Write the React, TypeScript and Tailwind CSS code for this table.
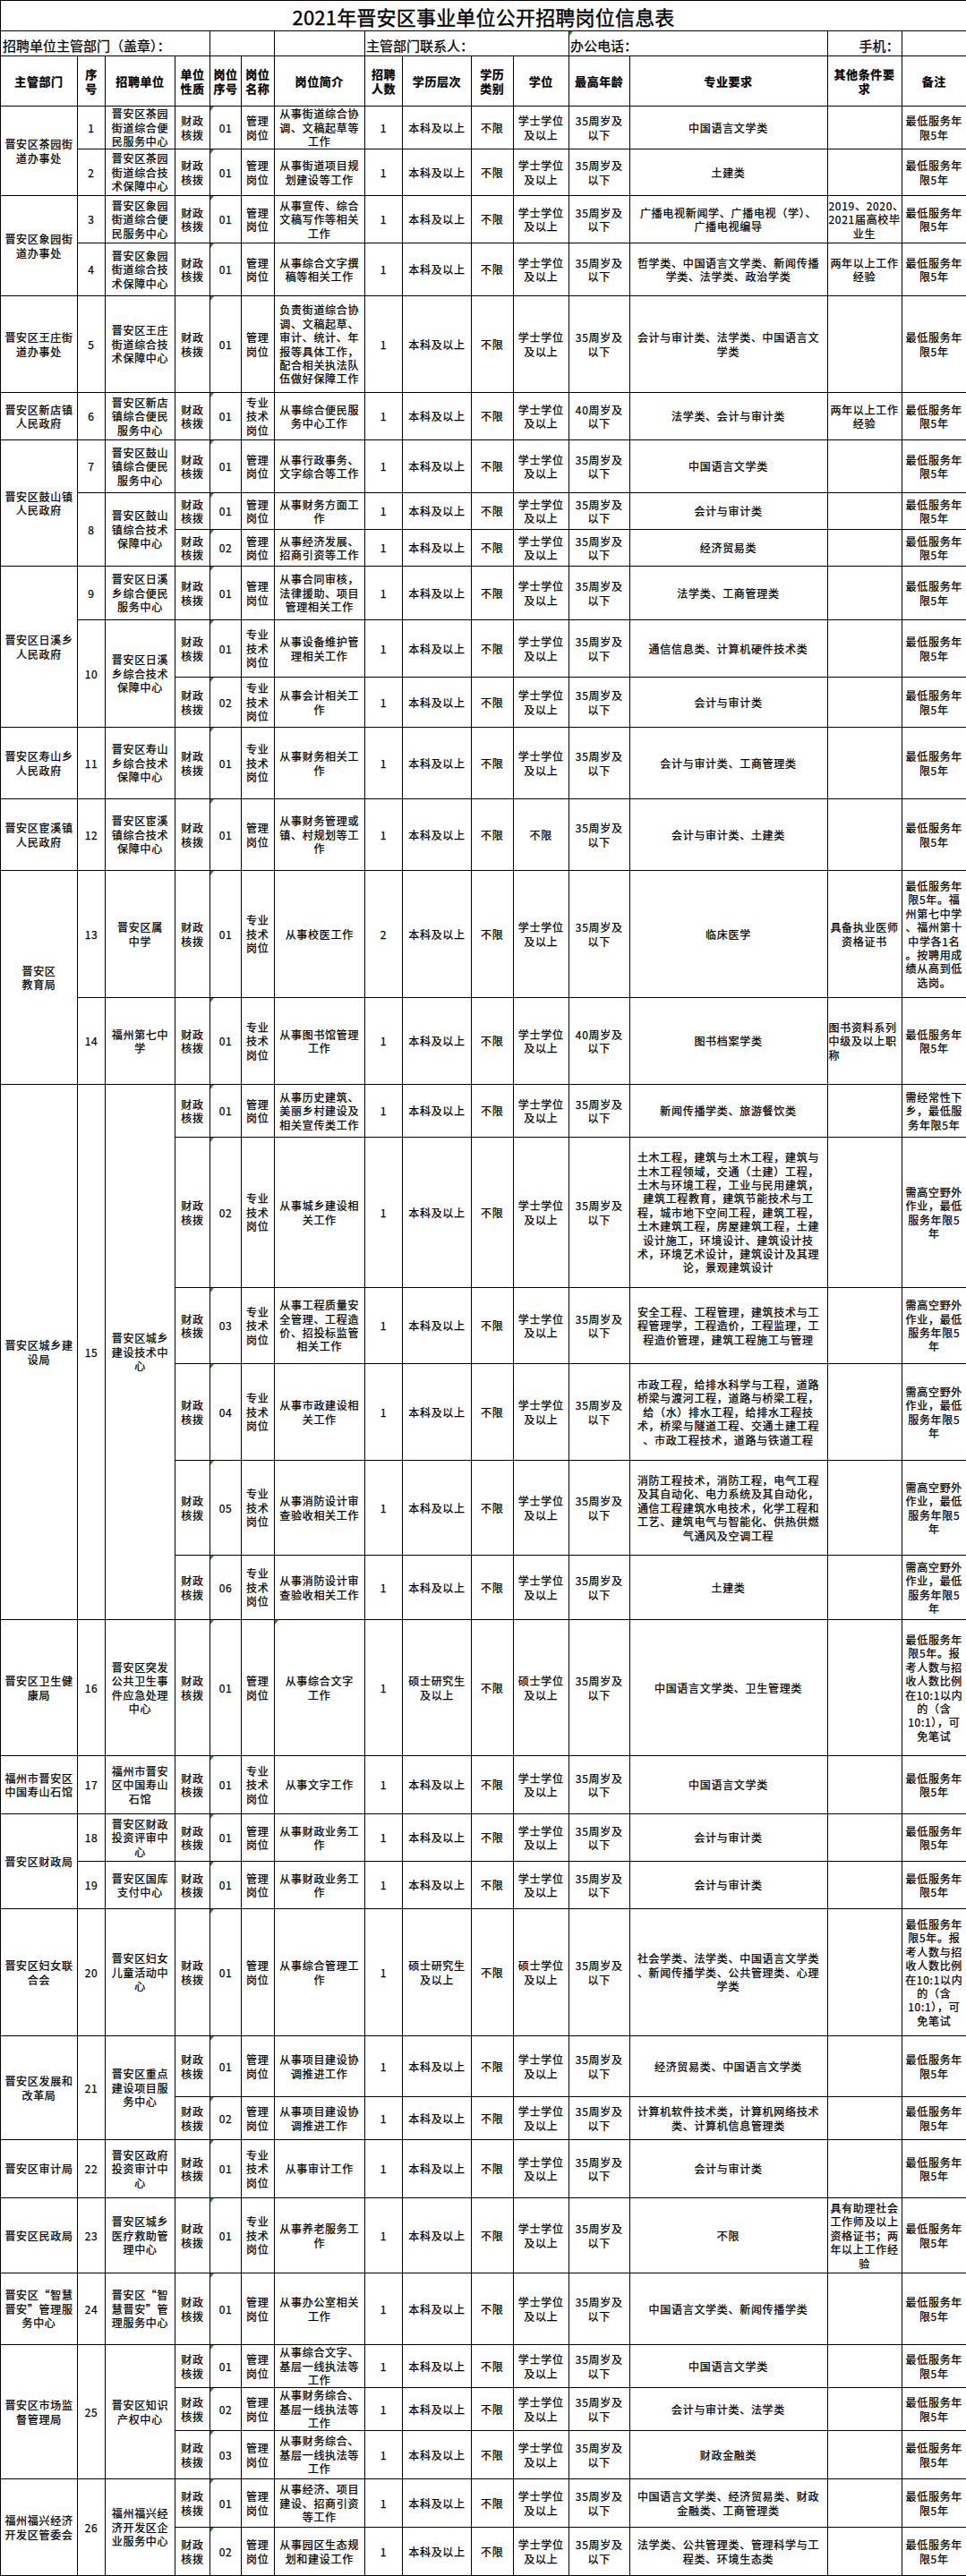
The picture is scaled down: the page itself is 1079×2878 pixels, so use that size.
import React from "react";

type C = { t: string; rs?: number; l?: boolean; tri?: boolean };
type R = { h: string; c: C[] };

const FZ = "财政\n核拨";
const GL = "管理\n岗位";
const ZJ = "专业\n技术\n岗位";
const BK = "本科及以上";
const XS = "学士学位\n及以上";
const A35 = "35周岁及\n以下";
const A40 = "40周岁及\n以下";
const BZ = "最低服务年\n限5年";
const GK = "需高空野外\n作业，最低\n服务年限5\n年";
const BZ10 = "最低服务年\n限5年。报\n考人数与招\n收人数比例\n在10:1以内\n的（含\n10:1），可\n免笔试";
const SS = "硕士研究生\n及以上";
const SX = "硕士学位\n及以上";

const c = (t: string, rs?: number): C => ({ t, rs });

function job(
  pos: string,
  name: string,
  intro: string,
  spec: string,
  other = "",
  bz = BZ,
  o: { n?: string; edu?: string; deg?: string; age?: string; otherLeft?: boolean; introTri?: boolean } = {}
): C[] {
  return [
    { t: FZ },
    { t: pos, tri: true },
    { t: name },
    { t: intro, tri: o.introTri },
    { t: o.n ?? "1" },
    { t: o.edu ?? BK },
    { t: "不限" },
    { t: o.deg ?? XS },
    { t: o.age ?? A35 },
    { t: spec },
    { t: other, l: o.otherLeft },
    { t: bz },
  ];
}

const rows: R[] = [
  { h: "h-[48px]", c: [c("晋安区茶园街\n道办事处", 2), c("1"), c("晋安区茶园\n街道综合便\n民服务中心"), ...job("01", GL, "从事街道综合协\n调、文稿起草等\n工作", "中国语言文学类")] },
  { h: "h-[52px]", c: [c("2"), c("晋安区茶园\n街道综合技\n术保障中心"), ...job("01", GL, "从事街道项目规\n划建设等工作", "土建类")] },
  { h: "h-[53px]", c: [c("晋安区象园街\n道办事处", 2), c("3"), c("晋安区象园\n街道综合便\n民服务中心"), ...job("01", GL, "从事宣传、综合\n文稿写作等相关\n工作", "广播电视新闻学、广播电视（学）、\n广播电视编导", "2019、2020、\n2021届高校毕\n业生")] },
  { h: "h-[59px]", c: [c("4"), c("晋安区象园\n街道综合技\n术保障中心"), ...job("01", GL, "从事综合文字撰\n稿等相关工作", "哲学类、中国语言文学类、新闻传播\n学类、法学类、政治学类", "两年以上工作\n经验")] },
  { h: "h-[108px]", c: [c("晋安区王庄街\n道办事处"), c("5"), c("晋安区王庄\n街道综合技\n术保障中心"), ...job("01", GL, "负责街道综合协\n调、文稿起草、\n审计、统计、年\n报等具体工作，\n配合相关执法队\n伍做好保障工作", "会计与审计类、法学类、中国语言文\n学类")] },
  { h: "h-[53px]", c: [c("晋安区新店镇\n人民政府"), c("6"), c("晋安区新店\n镇综合便民\n服务中心"), ...job("01", ZJ, "从事综合便民服\n务中心工作", "法学类、会计与审计类", "两年以上工作\n经验", BZ, { age: A40 })] },
  { h: "h-[59px]", c: [c("晋安区鼓山镇\n人民政府", 3), c("7"), c("晋安区鼓山\n镇综合便民\n服务中心"), ...job("01", GL, "从事行政事务、\n文字综合等工作", "中国语言文学类")] },
  { h: "h-[41px]", c: [c("8", 2), c("晋安区鼓山\n镇综合技术\n保障中心", 2), ...job("01", GL, "从事财务方面工\n作", "会计与审计类")] },
  { h: "h-[41px]", c: job("02", GL, "从事经济发展、\n招商引资等工作", "经济贸易类") },
  { h: "h-[60px]", c: [c("晋安区日溪乡\n人民政府", 3), c("9"), c("晋安区日溪\n乡综合便民\n服务中心"), ...job("01", GL, "从事合同审核，\n法律援助、项目\n管理相关工作", "法学类、工商管理类")] },
  { h: "h-[64px]", c: [c("10", 2), c("晋安区日溪\n乡综合技术\n保障中心", 2), ...job("01", ZJ, "从事设备维护管\n理相关工作", "通信信息类、计算机硬件技术类")] },
  { h: "h-[56px]", c: job("02", ZJ, "从事会计相关工\n作", "会计与审计类") },
  { h: "h-[80px]", c: [c("晋安区寿山乡\n人民政府"), c("11"), c("晋安区寿山\n乡综合技术\n保障中心"), ...job("01", ZJ, "从事财务相关工\n作", "会计与审计类、工商管理类")] },
  { h: "h-[80px]", c: [c("晋安区宦溪镇\n人民政府"), c("12"), c("晋安区宦溪\n镇综合技术\n保障中心"), ...job("01", GL, "从事财务管理或\n镇、村规划等工\n作", "会计与审计类、土建类", "", BZ, { deg: "不限" })] },
  { h: "h-[142px]", c: [c("晋安区\n教育局", 2), c("13"), c("晋安区属\n中学"), ...job("01", ZJ, "从事校医工作", "临床医学", "具备执业医师\n资格证书", "最低服务年\n限5年。福\n州第七中学\n、福州第十\n中学各1名\n。按聘用成\n绩从高到低\n选岗。", { n: "2" })] },
  { h: "h-[97px]", c: [c("14"), c("福州第七中\n学"), ...job("01", ZJ, "从事图书馆管理\n工作", "图书档案学类", "图书资料系列\n中级及以上职\n称", BZ, { age: A40, otherLeft: true })] },
  { h: "h-[59px]", c: [c("晋安区城乡建\n设局", 6), c("15", 6), c("晋安区城乡\n建设技术中\n心", 6), ...job("01", GL, "从事历史建筑、\n美丽乡村建设及\n相关宣传类工作", "新闻传播学类、旅游餐饮类", "", "需经常性下\n乡，最低服\n务年限5年")] },
  { h: "h-[168px]", c: job("02", ZJ, "从事城乡建设相\n关工作", "土木工程，建筑与土木工程，建筑与\n土木工程领域，交通（土建）工程，\n土木与环境工程，工业与民用建筑，\n建筑工程教育，建筑节能技术与工\n程，城市地下空间工程，建筑工程，\n土木建筑工程，房屋建筑工程，土建\n设计施工，环境设计、建筑设计技\n术，环境艺术设计，建筑设计及其理\n论，景观建筑设计", "", GK) },
  { h: "h-[85px]", c: job("03", ZJ, "从事工程质量安\n全管理、工程造\n价、招投标监管\n相关工作", "安全工程、工程管理，建筑技术与工\n程管理学，工程造价，工程监理，工\n程造价管理，建筑工程施工与管理", "", GK) },
  { h: "h-[108px]", c: job("04", ZJ, "从事市政建设相\n关工作", "市政工程，给排水科学与工程，道路\n桥梁与渡河工程，道路与桥梁工程，\n给（水）排水工程，给排水工程技\n术，桥梁与隧道工程、交通土建工程\n、市政工程技术，道路与铁道工程", "", GK) },
  { h: "h-[106px]", c: job("05", ZJ, "从事消防设计审\n查验收相关工作", "消防工程技术，消防工程，电气工程\n及其自动化、电力系统及其自动化，\n通信工程建筑水电技术，化学工程和\n工艺、建筑电气与智能化、供热供燃\n气通风及空调工程", "", GK) },
  { h: "h-[72px]", c: job("06", ZJ, "从事消防设计审\n查验收相关工作", "土建类", "", GK) },
  { h: "h-[152px]", c: [c("晋安区卫生健\n康局"), c("16"), c("晋安区突发\n公共卫生事\n件应急处理\n中心"), ...job("01", GL, "从事综合文字\n工作", "中国语言文学类、卫生管理类", "", BZ10, { edu: SS, deg: SX, introTri: true })] },
  { h: "h-[65px]", c: [c("福州市晋安区\n中国寿山石馆"), c("17"), c("福州市晋安\n区中国寿山\n石馆"), ...job("01", ZJ, "从事文字工作", "中国语言文学类")] },
  { h: "h-[53px]", c: [c("晋安区财政局", 2), c("18"), c("晋安区财政\n投资评审中\n心"), ...job("01", GL, "从事财政业务工\n作", "会计与审计类")] },
  { h: "h-[53px]", c: [c("19"), c("晋安区国库\n支付中心"), ...job("01", GL, "从事财政业务工\n作", "会计与审计类")] },
  { h: "h-[142px]", c: [c("晋安区妇女联\n合会"), c("20"), c("晋安区妇女\n儿童活动中\n心"), ...job("01", GL, "从事综合管理工\n作", "社会学类、法学类、中国语言文学类\n、新闻传播学类、公共管理类、心理\n学类", "", BZ10, { edu: SS, deg: SX })] },
  { h: "h-[68px]", c: [c("晋安区发展和\n改革局", 2), c("21", 2), c("晋安区重点\n建设项目服\n务中心", 2), ...job("01", GL, "从事项目建设协\n调推进工作", "经济贸易类、中国语言文学类")] },
  { h: "h-[48px]", c: job("02", GL, "从事项目建设协\n调推进工作", "计算机软件技术类，计算机网络技术\n类、计算机信息管理类") },
  { h: "h-[65px]", c: [c("晋安区审计局"), c("22"), c("晋安区政府\n投资审计中\n心"), ...job("01", ZJ, "从事审计工作", "会计与审计类")] },
  { h: "h-[84px]", c: [c("晋安区民政局"), c("23"), c("晋安区城乡\n医疗救助管\n理中心"), ...job("01", ZJ, "从事养老服务工\n作", "不限", "具有助理社会\n工作师及以上\n资格证书；两\n年以上工作经\n验")] },
  { h: "h-[80px]", c: [c("晋安区“智慧\n晋安”管理服\n务中心"), c("24"), c("晋安区“智\n慧晋安”管\n理服务中心"), ...job("01", GL, "从事办公室相关\n工作", "中国语言文学类、新闻传播学类")] },
  { h: "h-[48px]", c: [c("晋安区市场监\n督管理局", 3), c("25", 3), c("晋安区知识\n产权中心", 3), ...job("01", GL, "从事综合文字、\n基层一线执法等\n工作", "中国语言文学类")] },
  { h: "h-[48px]", c: job("02", GL, "从事财务综合、\n基层一线执法等\n工作", "会计与审计类、法学类") },
  { h: "h-[54px]", c: job("03", GL, "从事财务综合、\n基层一线执法等\n工作", "财政金融类") },
  { h: "h-[54px]", c: [c("福州福兴经济\n开发区管委会", 2), c("26", 2), c("福州福兴经\n济开发区企\n业服务中心", 2), ...job("01", GL, "从事经济、项目\n建设、招商引资\n等工作", "中国语言文学类、经济贸易类、财政\n金融类、工商管理类")] },
  { h: "h-[54px]", c: job("02", GL, "从事园区生态规\n划和建设工作", "法学类、公共管理类、管理科学与工\n程类、环境生态类") },
];

const headers = [
  "主管部门",
  "序\n号",
  "招聘单位",
  "单位\n性质",
  "岗位\n序号",
  "岗位\n名称",
  "岗位简介",
  "招聘\n人数",
  "学历层次",
  "学历\n类别",
  "学位",
  "最高年龄",
  "专业要求",
  "其他条件要\n求",
  "备注",
];

function Tri() {
  return (
    <span className="absolute left-0 top-0 h-0 w-0 border-t-[5px] border-r-[4px] border-t-[#1f9a1f] border-r-transparent" />
  );
}

const td = "relative border border-black px-[1px] py-0 align-middle whitespace-pre";

export default function App() {
  return (
    <div className="w-[1079px] min-h-[2878px] bg-white text-black font-['Noto_Sans_CJK_SC','Noto_Sans',sans-serif] [-webkit-text-stroke:0.25px_black]">
      <table className="w-[1079px] table-fixed border-collapse">
        <colgroup>
          <col className="w-[86px]" />
          <col className="w-[31px]" />
          <col className="w-[78px]" />
          <col className="w-[39px]" />
          <col className="w-[35px]" />
          <col className="w-[36.5px]" />
          <col className="w-[101.5px]" />
          <col className="w-[42px]" />
          <col className="w-[77px]" />
          <col className="w-[46.5px]" />
          <col className="w-[62.5px]" />
          <col className="w-[67.5px]" />
          <col className="w-[221px]" />
          <col className="w-[83px]" />
          <col className="w-[72.5px]" />
        </colgroup>
        <tbody>
          <tr className="h-[34px]">
            <td colSpan={15} className="border border-black p-0 text-center align-middle text-[22px] leading-none tracking-[0.2px] [-webkit-text-stroke:0.4px_black]">
              2021年晋安区事业单位公开招聘岗位信息表
            </td>
          </tr>
          <tr className="h-[28px] text-[15px] leading-none">
            <td colSpan={4} className="border border-black px-[2px] pt-[3px] text-left align-middle whitespace-nowrap">
              招聘单位主管部门（盖章）：
            </td>
            <td colSpan={2} className="border border-black" />
            <td className="border border-black" />
            <td colSpan={4} className="border border-black px-[1px] pt-[3px] text-left align-middle whitespace-nowrap">
              主管部门联系人：
            </td>
            <td colSpan={2} className="relative border border-black px-[1px] pt-[3px] text-left align-middle whitespace-nowrap">
              <Tri />
              办公电话：
            </td>
            <td className="border border-black px-[2px] pt-[3px] text-right align-middle whitespace-nowrap">手机：</td>
            <td className="border border-black" />
          </tr>
          <tr className="h-[56px] text-[13px] font-bold leading-[15.7px] tracking-[0.6px]">
            {headers.map((h, i) => (
              <td key={i} className={`${td} text-center`}>
                {h}
              </td>
            ))}
          </tr>
          {rows.map((r, ri) => (
            <tr key={ri} className={`${r.h} text-[12px] leading-[15.4px] tracking-[0.7px]`}>
              {r.c.map((cell, ci) => (
                <td key={ci} rowSpan={cell.rs} className={`${td} ${cell.l ? "text-left" : "text-center"}`}>
                  {cell.tri ? <Tri /> : null}
                  {cell.t}
                </td>
              ))}
            </tr>
          ))}
        </tbody>
      </table>
    </div>
  );
}
